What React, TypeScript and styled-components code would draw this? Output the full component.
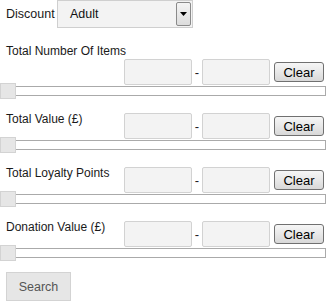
import React from "react";
import styled, { createGlobalStyle } from "styled-components";

const GlobalStyle = createGlobalStyle`
  body {
    margin: 0;
    background: #ffffff;
    font-family: "Liberation Sans", Arial, sans-serif;
    font-size: 12px;
    color: #1a1a1a;
  }
`;

const Page = styled.form`
  width: 326px;
`;

const DiscountRow = styled.div`
  display: flex;
  align-items: center;
  height: 28px;
  padding-left: 6px;
`;

const DiscountLabel = styled.label`
  width: 51px;
  font-size: 12.5px;
`;

// fake windows-style combobox
const SelectBox = styled.div`
  box-sizing: border-box;
  width: 136px;
  height: 28px;
  display: flex;
  align-items: center;
  justify-content: space-between;
  padding: 0 1px 0 12px;
  background: #f3f3f3;
  border: 1px solid #cfcfcf;
  font-size: 12.5px;
  color: #111;
`;

const ArrowButton = styled.span`
  box-sizing: border-box;
  width: 15px;
  height: 24px;
  display: flex;
  align-items: center;
  justify-content: center;
  border: 1px solid #8a8a8a;
  border-radius: 2px;
  background: linear-gradient(#f4f4f4, #dcdcdc);
`;

const Section = styled.div`
  margin-top: 16px;
`;

const Row = styled.div`
  display: flex;
  flex-wrap: wrap;
  align-items: flex-start;
  padding: 0 2px 0 6px;
`;

const FieldLabel = styled.label`
  line-height: 14px;
  font-size: 12px;
`;

const Controls = styled.div`
  margin-left: auto;
  height: 28px;
  display: flex;
  align-items: center;
`;

const RangeInput = styled.input.attrs({ type: "text" })`
  box-sizing: border-box;
  width: 68px;
  height: 26px;
  margin: 0;
  padding: 0 4px;
  background: #f3f3f3;
  border: 1px solid #d2d2d2;
  border-radius: 2px;
  outline: none;
`;

const Dash = styled.span`
  width: 10px;
  text-align: center;
  font-size: 13px;
`;

const ClearButton = styled.button.attrs({ type: "button" })`
  box-sizing: border-box;
  width: 50px;
  height: 20px;
  margin-left: 4px;
  padding: 0;
  border: 1px solid #707070;
  border-radius: 3px;
  background: linear-gradient(#f6f6f6 0%, #e8e8e8 50%, #d8d8d8 100%);
  font-family: "Liberation Sans", Arial, sans-serif;
  font-size: 13px;
  color: #000;
`;

const Track = styled.div`
  position: relative;
  box-sizing: border-box;
  height: 10px;
  border: 1px solid #aaaaaa;
  background: #fff;
`;

const Handle = styled.span`
  position: absolute;
  left: -1px;
  top: -4px;
  box-sizing: border-box;
  width: 16px;
  height: 16px;
  background: #e6e6e6;
  border: 1px solid #d3d3d3;
`;

const SearchButton = styled.button.attrs({ type: "button" })`
  box-sizing: border-box;
  margin: 14px 0 0 6px;
  width: 65px;
  height: 29px;
  padding: 0;
  background: #e6e6e6;
  border: 1px solid #d3d3d3;
  font-family: "Liberation Sans", Arial, sans-serif;
  font-size: 12.5px;
  color: #555;
`;

const ranges = [
  "Total Number Of Items",
  "Total Value (£)",
  "Total Loyalty Points",
  "Donation Value (£)",
];

const RangeFilter = ({ label }: { label: string }) => (
  <Section>
    <Row>
      <FieldLabel>{label}</FieldLabel>
      <Controls>
        <RangeInput />
        <Dash>-</Dash>
        <RangeInput />
        <ClearButton>Clear</ClearButton>
      </Controls>
    </Row>
    <Track>
      <Handle />
    </Track>
  </Section>
);

export default function App() {
  return (
    <>
      <GlobalStyle />
      <Page>
        <DiscountRow>
          <DiscountLabel>Discount</DiscountLabel>
          <SelectBox>
            <span>Adult</span>
            <ArrowButton>
              <svg width="7" height="4" viewBox="0 0 7 4">
                <path d="M0 0h7L3.5 4z" fill="#000" />
              </svg>
            </ArrowButton>
          </SelectBox>
        </DiscountRow>
        {ranges.map((r) => (
          <RangeFilter key={r} label={r} />
        ))}
        <SearchButton>Search</SearchButton>
      </Page>
    </>
  );
}
